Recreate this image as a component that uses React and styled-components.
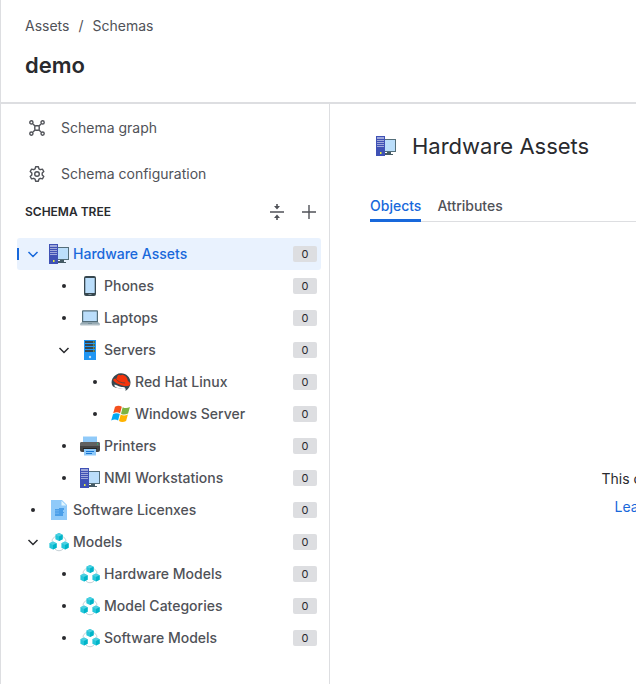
import React, { useState } from 'react';
import styled, { createGlobalStyle } from 'styled-components';

const GlobalStyle = createGlobalStyle`
  * {
    box-sizing: border-box;
  }

  body {
    margin: 0;
    background: #ffffff;
    color: #292a2e;
    font-family: Inter, 'Liberation Sans', sans-serif;
    font-size: 14px;
    line-height: 20px;
  }

  button {
    font: inherit;
    color: inherit;
    padding: 0;
    border: 0;
    background: none;
    cursor: pointer;
  }

  a {
    color: inherit;
    text-decoration: none;
  }
`;

/* ---------- icons ---------- */

const Glyph = styled.svg.attrs({ 'aria-hidden': true })`
  display: block;
  flex: none;
  width: ${(p) => p.$size || 20}px;
  height: ${(p) => p.$size || 20}px;
`;

const WorkstationIcon = () => (
  <Glyph viewBox="0 0 20 20">
    <path fill="#546e7a" d="M8 3h12v13H8z" />
    <path fill="#bbdefb" d="M9 4h10v11H9z" />
    <path fill="#455a64" d="M11 16h4v2h2v1H8v-2h3z" />
    <path fill="#3f51b5" d="M0 0h9v20H0z" />
    <path fill="#9fa8da" d="M1 1h7v2H1zM1 4h7v1H1zM1 6h7v1H1zM1 8h7v1H1zM1 10h7v1H1z" />
    <path fill="#e6ee3c" d="M4 16h1.500v2H4z" />
  </Glyph>
);

const PhoneIcon = () => (
  <Glyph viewBox="0 0 20 20">
    <rect x="4" width="12" height="20" rx="2" fill="#37474f" />
    <path fill="#bbdefb" d="M5.3 2h9.4v15H5.3z" />
    <path fill="#90a4ae" d="M8.5 18h3v.8h-3z" />
  </Glyph>
);

const LaptopIcon = () => (
  <Glyph viewBox="0 0 20 20">
    <path fill="#546e7a" d="M3 2.3h14a1 1 0 0 1 1 1V14H2V3.300a1 1 0 0 1 1-1z" />
    <path fill="#bbdefb" d="M3.200 3.500h13.600V13H3.200z" />
    <path fill="#90a4ae" d="M2 14h16l2 2H0z" />
    <path fill="#b0bec5" d="M0 15.800h20v.8a1 1 0 0 1-1 1H1a1 1 0 0 1-1-1z" />
    <path fill="#78909c" d="M8 15h4v.9H8z" />
  </Glyph>
);

const ServerIcon = () => (
  <Glyph viewBox="0 0 20 20">
    <path fill="#2196f3" d="M4 0h12v20H4z" />
    <path fill="#37474f" d="M5 1h10v2H5zM5 4h10v2H5zM5 7h10v2H5zM5 10h10v2H5z" />
    <path fill="#9ccc65" d="M13 1.500h1.500v1H13zM13 4.500h1.500v1H13zM13 7.500h1.500v1H13zM13 10.500h1.500v1H13z" />
    <circle cx="10" cy="17" r="1.200" fill="#bbdefb" />
  </Glyph>
);

const RedHatIcon = () => (
  <Glyph viewBox="0 0 20 20">
    <path
      fill="#37474f"
      d="M2 14.500C.2 12.500.2 9 1.500 6.600 3.400 3.300 6.600 1.300 10 1.300c5.300 0 9.500 4.200 9.500 9.300 0 3.300-1.700 6.500-5 8.400l.2-2.400c-4.800.5-9.700-.5-12.700-2.100z"
    />
    <path fill="#ffffff" d="M3.500 12.500c2 .3 3.500 1.700 6 2.200 1.500.3 3.300.2 4.500.8l-.3 1.500c-3.700.2-8-.8-10.200-2.700z" />
    <path
      fill="#f4340b"
      d="M5.200 6.900 6.700 3.500c.5-1.100 1.500-.8 2.600-.3 1 .4 1.400-.6 2.800-.3 2.900.6 4.200 2.700 4.800 6.200 1.700.8 2.500 2.100 2 3.300-.8 2-4.400 2-7.800 1C7.200 12.300 1.900 9.600 2.300 7.700c.2-.8 1.500-1 2.900-.8z"
    />
    <path fill="none" stroke="#37474f" strokeWidth=".7" d="M5.300 7.300c1 1.900 5 3.800 8.800 3.700" />
  </Glyph>
);

const WindowsIcon = () => (
  <Glyph viewBox="0 0 20 20">
    <path fill="#f4511e" d="M4 2.800c2.300-1.300 4.600-1.300 6.800-.1L9.100 9.200c-2.200-1.200-4.500-1.200-6.900.1z" />
    <path fill="#7cb342" d="M11.700 3.200c2.300 1.200 4.700 1.100 7.200-.2l-1.800 6.500c-2.500 1.400-4.900 1.400-7.100.2z" />
    <path fill="#03a9f4" d="M2 10.200c2.300-1.300 4.700-1.300 6.800-.1l-1.700 6.400c-2.200-1.200-4.500-1.200-6.900.1z" />
    <path fill="#ffb300" d="M9.700 10.600c2.300 1.200 4.700 1.200 7.200-.2l-1.800 6.500c-2.500 1.400-4.900 1.400-7.100.2z" />
  </Glyph>
);

const PrinterIcon = () => (
  <Glyph viewBox="0 0 20 20">
    <path fill="#90caf9" d="M3 .5h14V7H3z" />
    <path fill="#424242" d="M2 6h16a2 2 0 0 1 2 2v6a2 2 0 0 1-2 2H2a2 2 0 0 1-2-2V8a2 2 0 0 1 2-2z" />
    <path fill="#616161" d="M2 6h16a2 2 0 0 1 2 2v2H0V8a2 2 0 0 1 2-2z" />
    <path fill="#00e676" d="M17 7.500h1v1h-1z" />
    <path fill="#242424" d="M3 12h14v1H3z" />
    <path fill="#90caf9" d="M4 13h12v6.500H4z" />
    <path fill="#1976d2" d="M6 15h8v1H6zM6 17h6v1H6z" />
  </Glyph>
);

const DocumentIcon = () => (
  <Glyph viewBox="0 0 20 20">
    <path fill="#90caf9" d="M2 0h11l5 5v15H2z" />
    <path fill="#e1f5fe" d="M12.500.7V5.500h4.800z" />
    <path fill="#4a9ee8" d="M10 8h5v2h-1v2h1v1h-1v3H6V9h4z" />
    <path fill="#7cbcf3" d="M6 10.500h4v.7H6zM6 12.700h4v.7H6z" />
  </Glyph>
);

const Cube = ({ x, y }) => (
  <g transform={`translate(${x} ${y})`}>
    <path fill="#26c6da" d="M0-4 3.600-2.200v4.400L0 4-3.600 2.200v-4.400z" />
    <path fill="#4dd0e1" d="M0-4 3.600-2.200 0-.4-3.600-2.200z" />
    <path fill="#00b4c8" d="M0-.4 3.600-2.200v4.400L0 4z" />
  </g>
);

const ModelsIcon = () => (
  <Glyph viewBox="0 0 20 20">
    <path
      fill="none"
      stroke="#c5d0d6"
      strokeWidth="1"
      d="M7 4.500C4.500 5.200 3 7 3 9.500M13 4.500c2.500.7 4 2.500 4 5M6 17c2 2.300 6 2.300 8 0"
    />
    <Cube x={10} y={5} />
    <Cube x={4} y={13.500} />
    <Cube x={16} y={13.500} />
  </Glyph>
);

const GraphIcon = () => (
  <Glyph $size={16} viewBox="0 0 16 16" fill="none" stroke="#505258" strokeWidth="1.400">
    <rect x="5.800" y="5.800" width="4.400" height="4.400" rx="1" />
    <path d="m4 4 2 2M12 4l-2 2M4 12l2-2M12 12l-2-2" />
    <circle cx="2.400" cy="2.400" r="1.600" />
    <circle cx="13.600" cy="2.400" r="1.600" />
    <circle cx="2.400" cy="13.600" r="1.600" />
    <circle cx="13.600" cy="13.600" r="1.600" />
  </Glyph>
);

const GearIcon = () => (
  <Glyph $size={16} viewBox="0 0 16 16" fill="none" stroke="#505258" strokeWidth="1.400" strokeLinejoin="round">
    <path d="M6.600.8h2.800l.5 2.100 1.400.8 2.100-.6 1.400 2.400L13.200 7v2l1.600 1.500-1.400 2.400-2.100-.6-1.400.8-.5 2.100H6.600l-.5-2.100-1.400-.8-2.100.6-1.400-2.400L2.800 9V7L1.200 5.500l1.400-2.400 2.100.6 1.400-.8z" />
    <circle cx="8" cy="8" r="2.300" />
  </Glyph>
);

const CollapseIcon = () => (
  <Glyph $size={16} viewBox="0 0 16 16" fill="#505258">
    <path d="M1 7.300h14v1.400H1zM7.200 0h1.600v2H11L8 5.500 5 2h2.200zM7.200 16h1.600v-2H11l-3-3.500L5 14h2.200z" />
  </Glyph>
);

const PlusIcon = () => (
  <Glyph $size={16} viewBox="0 0 16 16" fill="#505258">
    <path d="M7.300 1h1.400v6.300H15v1.400H8.700V15H7.300V8.700H1V7.300h6.300z" />
  </Glyph>
);

const ChevronIcon = () => (
  <Glyph $size={16} viewBox="0 0 16 16" fill="none" stroke="currentColor" strokeWidth="1.500">
    <path d="m3.500 6 4.500 4.500L12.500 6" />
  </Glyph>
);

/* ---------- layout ---------- */

const Page = styled.div`
  display: flex;
  flex-direction: column;
  min-height: 100vh;
  border-left: 1px solid #dddee1;
  overflow: hidden;
`;

const PageHeader = styled.header`
  padding: 16px 24px 22px;
  border-bottom: 2px solid #dddee1;
`;

const Breadcrumbs = styled.nav`
  display: flex;
  gap: 9px;
  color: #505258;
`;

const PageTitle = styled.h1`
  margin: 14px 0 0;
  font-size: 22px;
  line-height: 30px;
  font-weight: 600;
`;

const Body = styled.div`
  display: flex;
  flex: 1;
`;

const Sidebar = styled.aside`
  flex: none;
  width: 329px;
  padding: 1px 8px 24px 16px;
  border-right: 1px solid #dddee1;
`;

const SideLink = styled.a`
  display: flex;
  align-items: center;
  gap: 16px;
  height: 46px;
  padding: 0 12px;
  color: #505258;
`;

const TreeHeader = styled.div`
  display: flex;
  align-items: center;
  justify-content: space-between;
  height: 30px;
  margin-bottom: 11px;
  padding: 0 4px 0 8px;
`;

const TreeTitle = styled.h2`
  margin: 0;
  font-size: 12px;
  line-height: 16px;
  font-weight: 600;
`;

const TreeActions = styled.div`
  display: flex;
  gap: 16px;
`;

const TreeList = styled.ul`
  margin: 0;
  padding: 0;
  list-style: none;
`;

const TreeRow = styled.div`
  display: flex;
  align-items: center;
  height: 32px;
  padding: 0 4px 0 ${(p) => 8 + p.$level * 31}px;
  border-radius: 3px;
  color: ${(p) => (p.$selected ? '#1868db' : '#292a2e')};
  background: ${(p) =>
    p.$selected
      ? 'linear-gradient(#1868db, #1868db) left center / 2px 12px no-repeat, #e9f2fe'
      : 'transparent'};
`;

const Toggle = styled.button`
  width: 16px;
  margin-right: 8px;
`;

const Bullet = styled.span`
  width: 4px;
  height: 4px;
  margin: 0 14px 0 6px;
  border-radius: 50%;
  background: #292a2e;
`;

const TypeLink = styled.a`
  display: flex;
  flex: 1;
  align-items: center;
  gap: 4px;
  font-weight: 500;
  color: ${(p) => (p.$selected ? '#1868db' : '#505258')};
`;

const Count = styled.span`
  width: 24px;
  border-radius: 2px;
  background: #dddee1;
  color: #292a2e;
  font-size: 11px;
  line-height: 16px;
  text-align: center;
`;

const Main = styled.main`
  flex: 1;
  min-width: 0;
  padding: 26px 0 0 40px;
`;

const TypeHeader = styled.div`
  display: flex;
  align-items: center;
  gap: 16px;
  padding-left: 6px;
`;

const TypeTitle = styled.h2`
  margin: 0;
  font-size: 22px;
  line-height: 32px;
  font-weight: 400;
`;

const Tabs = styled.div`
  display: flex;
  gap: 16px;
  margin-top: 32px;
  box-shadow: inset 0 -1px #dddee1;
`;

const Tab = styled.button`
  height: 28px;
  padding-bottom: 2px;
  font-weight: 500;
  color: ${(p) => (p.$active ? '#1868db' : '#505258')};
  border-bottom: 3px solid ${(p) => (p.$active ? '#1868db' : 'transparent')};
`;

const EmptyState = styled.div`
  min-width: 670px;
  padding-top: 243px;
  line-height: 28px;
  text-align: center;

  p {
    margin: 0;
  }

  a {
    color: #1868db;
  }
`;

/* ---------- data ---------- */

const schemaTree = [
  {
    name: 'Hardware Assets',
    icon: WorkstationIcon,
    count: 0,
    children: [
      { name: 'Phones', icon: PhoneIcon, count: 0 },
      { name: 'Laptops', icon: LaptopIcon, count: 0 },
      {
        name: 'Servers',
        icon: ServerIcon,
        count: 0,
        children: [
          { name: 'Red Hat Linux', icon: RedHatIcon, count: 0 },
          { name: 'Windows Server', icon: WindowsIcon, count: 0 },
        ],
      },
      { name: 'Printers', icon: PrinterIcon, count: 0 },
      { name: 'NMI Workstations', icon: WorkstationIcon, count: 0 },
    ],
  },
  { name: 'Software Licenxes', icon: DocumentIcon, count: 0 },
  {
    name: 'Models',
    icon: ModelsIcon,
    count: 0,
    children: [
      { name: 'Hardware Models', icon: ModelsIcon, count: 0 },
      { name: 'Model Categories', icon: ModelsIcon, count: 0 },
      { name: 'Software Models', icon: ModelsIcon, count: 0 },
    ],
  },
];

const TreeNode = ({ node, level, selected }) => {
  const [open, setOpen] = useState(true);
  const Icon = node.icon;
  const isSelected = node.name === selected;

  return (
    <li>
      <TreeRow $level={level} $selected={isSelected}>
        {node.children ? (
          <Toggle aria-label={`Toggle ${node.name}`} aria-expanded={open} onClick={() => setOpen(!open)}>
            <ChevronIcon />
          </Toggle>
        ) : (
          <Bullet />
        )}
        <TypeLink href="#" $selected={isSelected}>
          <Icon />
          {node.name}
        </TypeLink>
        <Count>{node.count}</Count>
      </TreeRow>
      {node.children && open && (
        <TreeList>
          {node.children.map((child) => (
            <TreeNode key={child.name} node={child} level={level + 1} selected={selected} />
          ))}
        </TreeList>
      )}
    </li>
  );
};

const App = () => {
  const [tab, setTab] = useState('Objects');

  return (
    <>
      <GlobalStyle />
      <Page>
        <PageHeader>
          <Breadcrumbs aria-label="Breadcrumbs">
            <a href="#">Assets</a>
            <span>/</span>
            <a href="#">Schemas</a>
          </Breadcrumbs>
          <PageTitle>demo</PageTitle>
        </PageHeader>
        <Body>
          <Sidebar>
            <SideLink href="#">
              <GraphIcon />
              Schema graph
            </SideLink>
            <SideLink href="#">
              <GearIcon />
              Schema configuration
            </SideLink>
            <TreeHeader>
              <TreeTitle>SCHEMA TREE</TreeTitle>
              <TreeActions>
                <button aria-label="Collapse all">
                  <CollapseIcon />
                </button>
                <button aria-label="Create object type">
                  <PlusIcon />
                </button>
              </TreeActions>
            </TreeHeader>
            <TreeList>
              {schemaTree.map((node) => (
                <TreeNode key={node.name} node={node} level={0} selected="Hardware Assets" />
              ))}
            </TreeList>
          </Sidebar>
          <Main>
            <TypeHeader>
              <WorkstationIcon />
              <TypeTitle>Hardware Assets</TypeTitle>
            </TypeHeader>
            <Tabs role="tablist">
              {['Objects', 'Attributes'].map((name) => (
                <Tab key={name} role="tab" aria-selected={tab === name} $active={tab === name} onClick={() => setTab(name)}>
                  {name}
                </Tab>
              ))}
            </Tabs>
            <EmptyState>
              <p>This object type has no objects</p>
              <a href="#">Learn about adding objects</a>
            </EmptyState>
          </Main>
        </Body>
      </Page>
    </>
  );
};

export default App;
